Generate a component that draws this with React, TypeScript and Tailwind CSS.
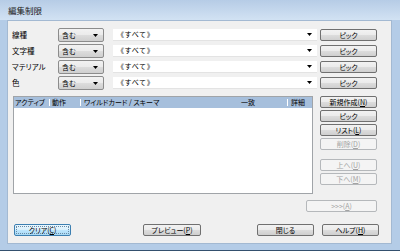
import React from 'react';

const font = "font-['Noto_Sans_CJK_JP','Noto_Sans',sans-serif] [font-feature-settings:'palt']";

function Btn({ children, w = 'w-[57px]', disabled = false, focused = false, className = '' }: {
  children: React.ReactNode;
  w?: string;
  disabled?: boolean;
  focused?: boolean;
  className?: string;
}) {
  const skin = disabled
    ? 'border-[#b5b8bb] bg-[#f4f4f4] text-[#a3a3a3]'
    : focused
      ? 'border-[#3c7fb1] bg-[linear-gradient(#eaf6fd,#d9f0fc_50%,#bee6fd_50%,#a7d9f5)] text-black'
      : 'border-[#707070] bg-[linear-gradient(#f2f2f2,#ebebeb_50%,#dddddd_50%,#cfcfcf)] text-black';
  return (
    <div className={`relative flex h-[12px] shrink-0 items-center justify-center whitespace-nowrap rounded-[2px] border text-[7px] leading-none ${w} ${skin} ${className}`}>
      {focused && <div className="absolute inset-[1px] border border-dotted border-[#6a8aa5]" />}
      <span className="relative">{children}</span>
    </div>
  );
}

function Arrow() {
  return (
    <svg width="5" height="3" viewBox="0 0 5 3" className="shrink-0">
      <path d="M0 0h5L2.5 3z" fill="#000" />
    </svg>
  );
}

const rows = ['線種', '文字種', 'マテリアル', '色'];

export default function App() {
  return (
    <div className={`flex h-[251px] w-[400px] flex-col overflow-hidden border-b border-[#34506e] bg-[#b4cce7] ${font} text-black`}>
      {/* title bar */}
      <div className="flex h-[20px] shrink-0 items-center bg-linear-to-b from-[#b6cce6] to-[#d2e2f3] pl-[8px] text-[8.5px] text-[#1a1a1a]">
        編集制限
      </div>

      <div className="flex flex-1 pb-[6px] pl-[7px] pr-[8px]">
        <div className="flex flex-1 flex-col border border-[#a3b9d2] bg-[#f0f0f0]">
          {/* filter rows */}
          <div className="mt-[7px] flex flex-col gap-[2px]">
            {rows.map((label) => (
              <div key={label} className="flex h-[14px] items-center">
                <div className="ml-[4px] w-[46px] whitespace-nowrap text-[7.5px] leading-none">{label}</div>
                <div className="flex h-[14px] w-[46px] items-center justify-between rounded-[2px] border border-[#8c8c8c] bg-[linear-gradient(#f2f2f2,#ebebeb_50%,#dddddd_50%,#cfcfcf)] pl-[3px] pr-[5px] text-[7px] leading-none">
                  <span>含む</span>
                  <Arrow />
                </div>
                <div className="ml-[9px] flex h-[12px] w-[204px] items-center justify-between border-b border-[#e3e3e3] bg-white pl-[4px] pr-[5px] text-[7px] leading-none">
                  <span className="tracking-[0.6px] [font-feature-settings:normal]">《すべて》</span>
                  <Arrow />
                </div>
                <Btn className="ml-[3px]">ピック</Btn>
              </div>
            ))}
          </div>

          {/* list + side buttons */}
          <div className="mt-[6px] flex">
            <div className="ml-[5px] flex h-[98px] w-[300px] flex-col border border-[#a0a4a8] bg-white">
              <div className="flex h-[11px] items-center whitespace-nowrap bg-[#a6bfdc] text-[7px] leading-none">
                <div className="w-[36px] border-r border-white pl-[1px]">アクティブ</div>
                <div className="w-[31px] border-r border-white pl-[2px]">動作</div>
                <div className="w-[160px] pl-[3px]">ワイルドカード / スキーマ</div>
                <div className="w-[47px] border-r border-white">一致</div>
                <div className="w-[23px] pl-[3px]">詳細</div>
              </div>
            </div>
            <div className="ml-[7px] flex flex-col">
              <Btn>新規作成(<u>N</u>)</Btn>
              <Btn className="mt-[2px]">ピック</Btn>
              <Btn className="mt-[2px]">リスト(<u>L</u>)</Btn>
              <Btn className="mt-[2px]" disabled>削除(<u>D</u>)</Btn>
              <Btn className="mt-[9px]" disabled>上へ(<u>U</u>)</Btn>
              <Btn className="mt-[2px]" disabled>下へ(<u>M</u>)</Btn>
            </div>
          </div>

          <div className="mt-[6px] flex justify-end pr-[14px]">
            <Btn w="w-[71px]" disabled>&gt;&gt;&gt;(<u>A</u>)</Btn>
          </div>

          {/* bottom buttons */}
          <div className="mt-[12px] flex">
            <Btn focused className="ml-[6px]">クリア(<u>C</u>)</Btn>
            <Btn w="w-[58px]" className="ml-[72px]">プレビュー(<u>P</u>)</Btn>
            <Btn className="ml-[56px]">閉じる</Btn>
            <Btn className="ml-[8px]">ヘルプ(<u>H</u>)</Btn>
          </div>
        </div>
      </div>
    </div>
  );
}
